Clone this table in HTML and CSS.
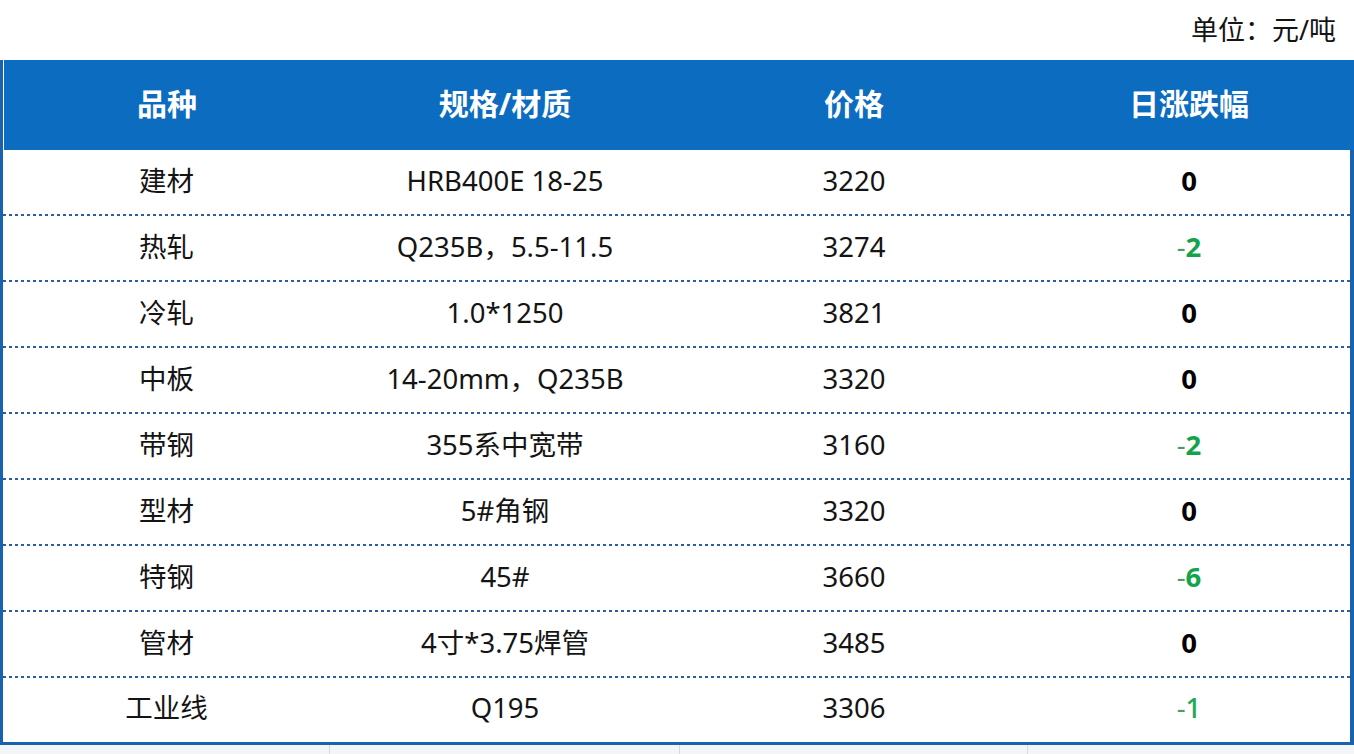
FILE: index.html
```html
<!DOCTYPE html>
<html lang="zh-CN">
<head>
<meta charset="utf-8">
<link rel="stylesheet" href="styles.css">
</head>
<body>
<div class="page">
  <div class="unit">单位：元/吨</div>
  <div class="table">
    <div class="row head">
      <div class="cell">品种</div>
      <div class="cell">规格/材质</div>
      <div class="cell">价格</div>
      <div class="cell">日涨跌幅</div>
    </div>
    <div class="row"><div class="cell">建材</div><div class="cell">HRB400E 18-25</div><div class="cell">3220</div><div class="cell chg">0</div></div>
    <div class="row"><div class="cell">热轧</div><div class="cell">Q235B，5.5-11.5</div><div class="cell">3274</div><div class="cell chg down"><span class="minus">-</span>2</div></div>
    <div class="row"><div class="cell">冷轧</div><div class="cell">1.0*1250</div><div class="cell">3821</div><div class="cell chg">0</div></div>
    <div class="row"><div class="cell">中板</div><div class="cell">14-20mm，Q235B</div><div class="cell">3320</div><div class="cell chg">0</div></div>
    <div class="row"><div class="cell">带钢</div><div class="cell">355系中宽带</div><div class="cell">3160</div><div class="cell chg down"><span class="minus">-</span>2</div></div>
    <div class="row"><div class="cell">型材</div><div class="cell">5#角钢</div><div class="cell">3320</div><div class="cell chg">0</div></div>
    <div class="row"><div class="cell">特钢</div><div class="cell">45#</div><div class="cell">3660</div><div class="cell chg down"><span class="minus">-</span>6</div></div>
    <div class="row"><div class="cell">管材</div><div class="cell">4寸*3.75焊管</div><div class="cell">3485</div><div class="cell chg">0</div></div>
    <div class="row last"><div class="cell">工业线</div><div class="cell">Q195</div><div class="cell">3306</div><div class="cell chg down light"><span class="minus">-</span>1</div></div>
  </div>
  <div class="grid-strip">
    <div class="gcell"></div><div class="gcell"></div><div class="gcell"></div><div class="gcell"></div>
  </div>
</div>
</body>
</html>
```
FILE: styles.css
```css
html, body {
  margin: 0;
  padding: 0;
  background: #ffffff;
}
body {
  font-family: "Noto Sans", "Noto Sans CJK SC", sans-serif;
  color: #141414;
  width: 1354px;
  height: 754px;
  overflow: hidden;
}
.page {
  display: flex;
  flex-direction: column;
  width: 1354px;
}
.unit {
  height: 60px;
  display: flex;
  align-items: center;
  justify-content: flex-end;
  padding-right: 18px;
  padding-bottom: 2px;
  font-size: 27px;
  line-height: 1;
  color: #141414;
  box-sizing: border-box;
}
.table {
  border-left: 3px solid #1763b0;
  border-right: 4px solid #1763b0;
  border-bottom: 3px solid #1763b0;
  box-sizing: border-box;
}
.row {
  display: grid;
  grid-template-columns: 327px 350px 348px 1fr;
  height: 66px;
  align-items: center;
  background-image: repeating-linear-gradient(to right, #2b5f9f 0 3px, transparent 3px 6px);
  background-size: 100% 2px;
  background-repeat: no-repeat;
  background-position: left bottom;
}
.row.head {
  height: 90px;
  background: #0c6cbf;
  margin-left: 1px;
  margin-right: -4px;
  padding-right: 4px;
  color: #ffffff;
  font-weight: 700;
  grid-template-columns: 326px 350px 348px 1fr;
}
.row.last {
  background-image: none;
  height: 64px;
}
.cell {
  text-align: center;
  font-size: 27.5px;
  line-height: 1;
  padding-bottom: 4px;
}
.head .cell {
  font-size: 30px;
  padding-bottom: 2px;
}
.chg {
  font-weight: 700;
  color: #000000;
}
.chg.down {
  color: #12a44a;
}
.chg.down.light {
  color: #22a855;
  font-weight: 500;
}
.minus {
  font-weight: 400;
  color: #4a9a6a;
}
.grid-strip {
  display: grid;
  grid-template-columns: 330px 350px 348px 1fr;
  height: 9px;
  background: #f4f5f7;
}
.gcell {
  border-right: 1px solid #d9dadd;
}
.gcell:last-child {
  border-right: none;
}
```
